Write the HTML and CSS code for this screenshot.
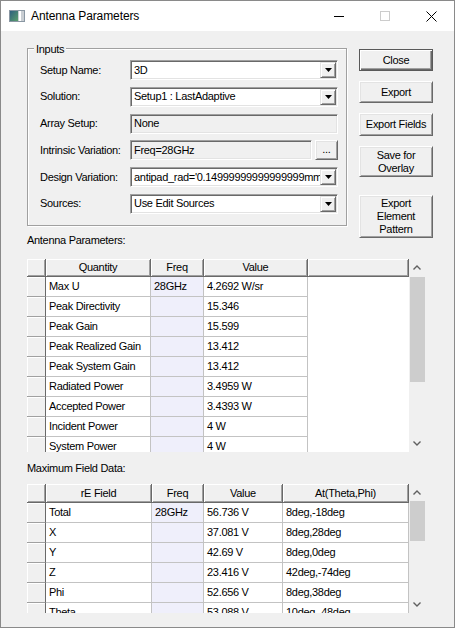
FILE: index.html
```html
<!DOCTYPE html>
<html>
<head>
<meta charset="utf-8">
<title>Antenna Parameters</title>
<link rel="stylesheet" href="styles.css">
</head>
<body>
<div class="window">
  <div class="titlebar">
    <svg class="app-icon" width="16" height="12" viewBox="0 0 16 12">
      <defs><linearGradient id="ig" x1="0" y1="0" x2="1" y2="1"><stop offset="0" stop-color="#2f5f7f"/><stop offset="1" stop-color="#5a9e6c"/></linearGradient></defs>
      <rect x="0.5" y="0.5" width="15" height="11" fill="#c9ced3" stroke="#8a97a3"/>
      <rect x="1" y="1" width="8" height="10" fill="url(#ig)"/>
      <rect x="10" y="1" width="2" height="10" fill="#ffffff"/>
    </svg>
    <span class="title">Antenna Parameters</span>
    <div class="caption">
      <div class="cap"><svg width="10" height="1"><rect width="10" height="1" fill="#000"/></svg></div>
      <div class="cap"><svg width="10" height="10"><rect x="0.5" y="0.5" width="9" height="9" fill="none" stroke="#cccccc"/></svg></div>
      <div class="cap"><svg width="11" height="11"><path d="M0.5,0.5 L10.5,10.5 M10.5,0.5 L0.5,10.5" stroke="#000" stroke-width="1"/></svg></div>
    </div>
  </div>

  <div class="client">
    <div class="top">
      <div class="left">
        <div class="group">
          <span class="group-title">Inputs</span>
          <div class="form">
            <span class="lbl">Setup Name:</span>
            <div class="field"><span class="ftext">3D</span><span class="drop"><svg width="7" height="4"><polygon points="0,0 7,0 3.5,4" fill="#000"/></svg></span></div>

            <span class="lbl">Solution:</span>
            <div class="field"><span class="ftext">Setup1 : LastAdaptive</span><span class="drop"><svg width="7" height="4"><polygon points="0,0 7,0 3.5,4" fill="#000"/></svg></span></div>

            <span class="lbl">Array Setup:</span>
            <div class="field ro"><span class="ftext">None</span></div>

            <span class="lbl">Intrinsic Variation:</span>
            <div class="pair">
              <div class="field ro grow"><span class="ftext">Freq=28GHz</span></div>
              <div class="btn dots">...</div>
            </div>

            <span class="lbl">Design Variation:</span>
            <div class="field"><span class="ftext">antipad_rad='0.14999999999999999mm'</span><span class="drop"><svg width="7" height="4"><polygon points="0,0 7,0 3.5,4" fill="#000"/></svg></span></div>

            <span class="lbl">Sources:</span>
            <div class="field"><span class="ftext">Use Edit Sources</span><span class="drop"><svg width="7" height="4"><polygon points="0,0 7,0 3.5,4" fill="#000"/></svg></span></div>
          </div>
        </div>
        <div class="sect lbl-ant">Antenna Parameters:</div>
      </div>

      <div class="buttons">
        <div class="btn default h22">Close</div>
        <div class="btn h22">Export</div>
        <div class="btn h23">Export Fields</div>
        <div class="btn h31">Save for<br>Overlay</div>
        <div class="btn h43 extra">Export<br>Element<br>Pattern</div>
      </div>
    </div>

    <div class="gridbox gb1">
      <div class="t t1">
        <div class="h"></div><div class="h">Quantity</div><div class="h">Freq</div><div class="h">Value</div><div class="h"></div>

        <div class="rh"></div><div class="c">Max U</div><div class="c f">28GHz</div><div class="c">4.2692 W/sr</div><div class="v"></div>
        <div class="rh"></div><div class="c">Peak Directivity</div><div class="c f"></div><div class="c">15.346</div><div class="v"></div>
        <div class="rh"></div><div class="c">Peak Gain</div><div class="c f"></div><div class="c">15.599</div><div class="v"></div>
        <div class="rh"></div><div class="c">Peak Realized Gain</div><div class="c f"></div><div class="c">13.412</div><div class="v"></div>
        <div class="rh"></div><div class="c">Peak System Gain</div><div class="c f"></div><div class="c">13.412</div><div class="v"></div>
        <div class="rh"></div><div class="c">Radiated Power</div><div class="c f"></div><div class="c">3.4959 W</div><div class="v"></div>
        <div class="rh"></div><div class="c">Accepted Power</div><div class="c f"></div><div class="c">3.4393 W</div><div class="v"></div>
        <div class="rh"></div><div class="c">Incident Power</div><div class="c f"></div><div class="c">4 W</div><div class="v"></div>
        <div class="rh"></div><div class="c">System Power</div><div class="c f"></div><div class="c">4 W</div><div class="v"></div>
      </div>
      <div class="vs">
        <div class="arr up18"><svg width="8" height="5"><polyline points="0.5,4.5 4,1 7.5,4.5" fill="none" stroke="#606060" stroke-width="1.4"/></svg></div>
        <div class="thumb th1"></div>
        <div class="sp"></div>
        <div class="arr dn17"><svg width="8" height="5"><polyline points="0.5,0.5 4,4 7.5,0.5" fill="none" stroke="#606060" stroke-width="1.4"/></svg></div>
      </div>
    </div>

    <div class="sect lbl-max">Maximum Field Data:</div>

    <div class="gridbox gb2">
      <div class="t t2">
        <div class="h"></div><div class="h">rE Field</div><div class="h">Freq</div><div class="h">Value</div><div class="h">At(Theta,Phi)</div>

        <div class="rh"></div><div class="c">Total</div><div class="c f">28GHz</div><div class="c">56.736 V</div><div class="c">8deg,-18deg</div>
        <div class="rh"></div><div class="c">X</div><div class="c f"></div><div class="c">37.081 V</div><div class="c">8deg,28deg</div>
        <div class="rh"></div><div class="c">Y</div><div class="c f"></div><div class="c">42.69 V</div><div class="c">8deg,0deg</div>
        <div class="rh"></div><div class="c">Z</div><div class="c f"></div><div class="c">23.416 V</div><div class="c">42deg,-74deg</div>
        <div class="rh"></div><div class="c">Phi</div><div class="c f"></div><div class="c">52.656 V</div><div class="c">8deg,38deg</div>
        <div class="rh"></div><div class="c">Theta</div><div class="c f"></div><div class="c">53.088 V</div><div class="c">10deg,-48deg</div>
      </div>
      <div class="vs">
        <div class="arr up17"><svg width="8" height="5"><polyline points="0.5,4.5 4,1 7.5,4.5" fill="none" stroke="#606060" stroke-width="1.4"/></svg></div>
        <div class="thumb th2"></div>
        <div class="sp"></div>
        <div class="arr dn17"><svg width="8" height="5"><polyline points="0.5,0.5 4,4 7.5,0.5" fill="none" stroke="#606060" stroke-width="1.4"/></svg></div>
      </div>
    </div>
  </div>
</div>
</body>
</html>
```
FILE: styles.css
```css
* { box-sizing: border-box; }
html, body { margin: 0; padding: 0; }
body {
  font-family: "Liberation Sans", Arial, sans-serif;
  font-size: 11px;
  letter-spacing: -0.3px;
  color: #000;
  background: #fff;
}
.window {
  width: 455px;
  height: 628px;
  border: 1px solid #8a8a8a;
  background: #f0f0f0;
  display: flex;
  flex-direction: column;
  overflow: hidden;
}
.titlebar {
  height: 30px;
  flex-shrink: 0;
  background: #fff;
  display: flex;
  align-items: center;
}
.app-icon { margin-left: 8px; display: block; }
.title { margin-left: 6px; font-size: 12px; letter-spacing: -0.1px; }
.caption { margin-left: auto; display: flex; }
.cap {
  width: 46px;
  height: 30px;
  display: flex;
  align-items: center;
  justify-content: center;
}
.cap svg { display: block; }

.client { flex: 1; padding: 17px 0 0 26px; }
.top { display: flex; align-items: flex-start; }
.left { width: 320px; }

.group {
  position: relative;
  border: 1px solid #a0a0a0;
  box-shadow: inset 1px 1px #fff, 1px 1px #fff;
  padding: 11px 7px 11px 12px;
}
.group-title {
  position: absolute;
  top: -6px;
  left: 6px;
  padding: 0 2px;
  background: #f0f0f0;
  line-height: 13px;
}
.form {
  display: grid;
  grid-template-columns: 90px 208px;
  row-gap: 6.8px;
  align-items: center;
}
.lbl { line-height: 13px; white-space: nowrap; }
.field {
  height: 20px;
  display: flex;
  align-items: center;
  border: 1px solid;
  border-color: #a0a0a0 #fff #fff #a0a0a0;
  box-shadow: inset 1px 1px #696969, inset -1px -1px #e3e3e3;
  background: #fff;
  overflow: hidden;
}
.field.ro { background: #f0f0f0; }
.ftext {
  flex: 1;
  min-width: 0;
  padding-left: 3px;
  white-space: nowrap;
  overflow: hidden;
  line-height: 13px;
}
.drop {
  flex-shrink: 0;
  width: 16px;
  height: 16px;
  margin-right: 1px;
  background: #f0f0f0;
  border: 1px solid;
  border-color: #e3e3e3 #696969 #696969 #e3e3e3;
  box-shadow: inset 1px 1px #fff, inset -1px -1px #a0a0a0;
  display: flex;
  align-items: center;
  justify-content: center;
}
.drop svg { display: block; }
.pair { display: flex; gap: 3px; }
.grow { flex: 1; }

.btn {
  background: #f0f0f0;
  border: 1px solid;
  border-color: #fff #696969 #696969 #fff;
  box-shadow: inset 1px 1px #e3e3e3, inset -1px -1px #a0a0a0;
  display: flex;
  align-items: center;
  justify-content: center;
  text-align: center;
  line-height: 13px;
}
.btn.default {
  border-color: #5a5a5a;
  box-shadow: inset 1px 1px #fff, inset -1px -1px #696969, inset -2px -2px #a0a0a0;
}
.dots { width: 23px; height: 20px; align-items: flex-end; padding-bottom: 3px; }
.buttons {
  margin-left: 12px;
  margin-top: 1px;
  width: 74px;
  display: flex;
  flex-direction: column;
  gap: 10px;
}
.h22 { height: 22px; }
.h23 { height: 23px; }
.h31 { height: 31px; }
.h43 { height: 43px; }
.extra { margin-top: 8px; }

.sect { line-height: 13px; }
.lbl-ant { margin-top: 8px; }
.lbl-max { margin-top: 10px; }

.gridbox { display: flex; width: 398px; }
.gb1 { margin-top: 12px; }
.gb2 { margin-top: 9px; }

.t {
  display: grid;
  width: 382px;
  overflow: hidden;
  align-content: start;
  background: #fff;
}
.t1 {
  grid-template-columns: 19px 105px 53px 104px 101px;
  grid-template-rows: 18px;
  grid-auto-rows: 20px;
  height: 193px;
}
.t2 {
  grid-template-columns: 19px 106px 52px 79px 126px;
  grid-template-rows: 19px;
  grid-auto-rows: 20px;
  height: 129px;
}
.h {
  background: #f0f0f0;
  border-right: 1px solid #696969;
  border-bottom: 1px solid #696969;
  box-shadow: inset 1px 1px #fff, inset -1px -1px #a0a0a0;
  text-align: center;
  line-height: 17px;
  white-space: nowrap;
  overflow: hidden;
}
.t2 .h { line-height: 18px; }
.rh {
  background: #f0f0f0;
  border-right: 1px solid #696969;
  border-bottom: 1px solid #a0a0a0;
  box-shadow: inset 1px 1px #fff;
}
.c {
  border-right: 1px solid #c3c3c3;
  border-bottom: 1px solid #c3c3c3;
  padding-left: 3px;
  line-height: 19px;
  white-space: nowrap;
  overflow: hidden;
}
.f { background: #efeffb; }
.v { background: #fff; }

.vs {
  width: 16px;
  display: flex;
  flex-direction: column;
  background: #f0f0f0;
}
.arr { display: flex; align-items: center; justify-content: center; flex-shrink: 0; }
.arr svg { display: block; }
.up18 { height: 18px; }
.up17 { height: 17px; }
.dn17 { height: 17px; }
.thumb { margin-left: 1px; background: #cdcdcd; flex-shrink: 0; }
.th1 { height: 105px; }
.th2 { height: 40px; }
.sp { flex: 1; }
```
